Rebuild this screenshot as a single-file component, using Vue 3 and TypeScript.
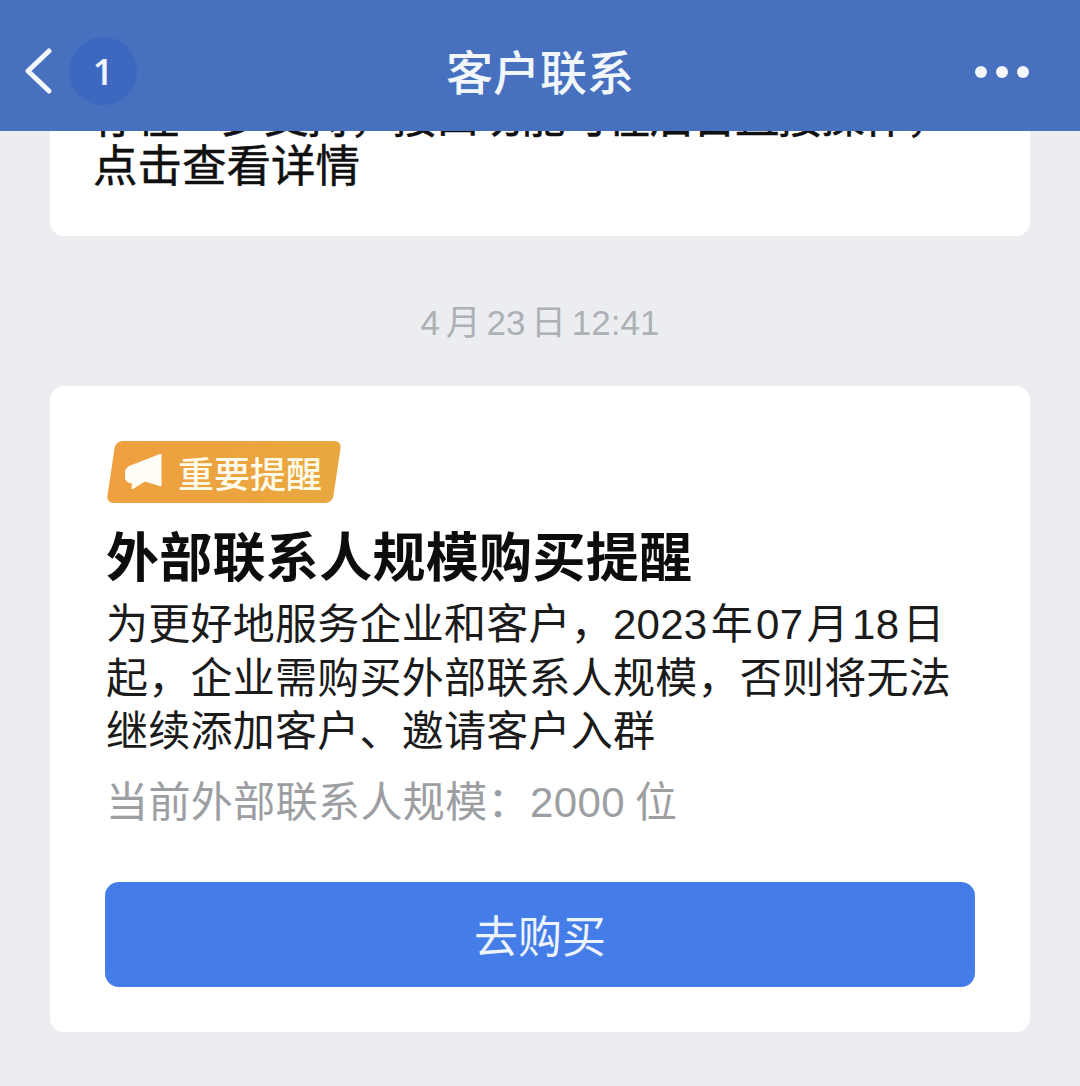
<script setup lang="ts">
const dots = [0, 1, 2]
</script>

<template>
  <div class="page">
    <header class="nav">
      <div class="nav-left">
        <svg class="back" viewBox="0 0 28 46" width="28" height="46">
          <path d="M25 3 L4 23 L25 43" fill="none" stroke="#f4f8fc" stroke-width="5" stroke-linecap="round" stroke-linejoin="round" />
        </svg>
        <span class="badge">1</span>
      </div>
      <h1 class="nav-title">客户联系</h1>
      <div class="more">
        <i v-for="d in dots" :key="d"></i>
      </div>
    </header>

    <main class="list">
      <section class="card top-card">
        <p class="clip-line">存在一步支持，接口功能可在后台直接操作，</p>
        <p class="top-text">点击查看详情</p>
      </section>

      <div class="time">4 月 23 日 12:41</div>

      <section class="card notice">
        <div class="tag">
          <svg class="tag-icon" viewBox="0 0 37 36" width="37" height="36">
            <path d="M36 0 L36 32 L20 27 L7 35 L7.5 29 C2 29 0 26 0 21 C0 15 3 12 8 11 Z" fill="#fffdf6" stroke="#fffdf6" stroke-width="1" stroke-linejoin="round" />
          </svg>
          <span>重要提醒</span>
        </div>
        <h2 class="notice-title">外部联系人规模购买提醒</h2>
        <p class="notice-body">为更好地服务企业和客户，2023 年 07 月 18 日起，企业需购买外部联系人规模，否则将无法继续添加客户、邀请客户入群</p>
        <p class="notice-meta">当前外部联系人规模：2000 位</p>
        <button class="buy">去购买</button>
      </section>
    </main>
  </div>
</template>

<style>
html, body {
  margin: 0;
  background: #ebedf1;
}
</style>

<style scoped>
.page {
  width: 1080px;
  height: 1086px;
  overflow: hidden;
  background: #ebedf1;
  font-family: "Liberation Sans", "Noto Sans CJK SC", sans-serif;
}

.nav {
  height: 131px;
  background: #4770bf;
  display: grid;
  grid-template-columns: 1fr auto 1fr;
  align-items: center;
  padding: 11px 51px 0 24px;
  box-sizing: border-box;
  position: relative;
  z-index: 1;
}

.nav-left {
  display: flex;
  align-items: center;
  gap: 17px;
}

.badge {
  width: 68px;
  height: 68px;
  border-radius: 50%;
  background: #3c68c0;
  color: #f1f5fb;
  font-size: 36px;
  font-weight: 600;
  font-family: "Open Sans", sans-serif;
  display: flex;
  align-items: center;
  justify-content: center;
}

.nav-title {
  margin: 0 0 4px 27px;
  color: #f1f6fb;
  font-size: 47px;
  font-weight: 500;
  font-family: "Noto Sans CJK SC", sans-serif;
  line-height: 1;
}

.more {
  display: flex;
  justify-content: flex-end;
  gap: 9px;
  margin-top: 2px;
}

.more i {
  width: 12px;
  height: 12px;
  border-radius: 50%;
  background: #f4f7fc;
}

.list {
  padding: 0 50px;
}

.card {
  background: #fff;
  border-radius: 14px;
}

.top-card {
  height: 105px;
  padding: 0 43px;
  overflow: hidden;
  color: #101010;
  font-size: 44.5px;
  -webkit-text-stroke: 0.5px #101010;
  font-family: "Noto Sans CJK SC", sans-serif;
  box-sizing: border-box;
  border-radius: 0 0 14px 14px;
}

.clip-line {
  margin: -41px 0 0;
  line-height: 48px;
  height: 48px;
  letter-spacing: -1.7px;
  white-space: nowrap;
}

.top-text {
  margin: -3px 0 0;
  line-height: 56px;
}

.time {
  text-align: center;
  color: #adb0b5;
  font-size: 35px;
  word-spacing: -4px;
  line-height: 44px;
  margin: 65px 0 41px;
}

.notice {
  height: 646px;
  padding: 55px 55px 0 56px;
  box-sizing: border-box;
}

.tag {
  width: 236px;
  height: 62px;
  position: relative;
  display: flex;
  align-items: center;
  gap: 16px;
  padding-left: 19px;
  box-sizing: border-box;
  color: #fffbea;
  font-size: 36px;
  font-weight: 500;
  font-family: "Noto Sans CJK SC", sans-serif;
}

.tag::before {
  content: "";
  position: absolute;
  inset: 0 5px;
  background: linear-gradient(90deg, #ef9f3f, #e9a83f);
  border-radius: 7px;
  transform: skewX(-8.5deg);
}

.tag > * {
  position: relative;
}

.notice-title {
  margin: 17px 0 0;
  color: #0d0d0d;
  font-size: 53px;
  letter-spacing: 0.3px;
  font-weight: 700;
  font-family: "Noto Sans CJK SC", sans-serif;
  line-height: 68px;
  white-space: nowrap;
}

.notice-body {
  margin: 10px 0 0;
  color: #1b1b1b;
  font-size: 42px;
  letter-spacing: 0.25px;
  word-spacing: -8.7px;
  line-height: 53.5px;
}

.notice-meta {
  margin: 16px 0 0;
  color: #9c9ea2;
  font-size: 42px;
  letter-spacing: 0.4px;
  word-spacing: -2px;
  line-height: 56px;
}

.buy {
  display: block;
  width: 870px;
  height: 105px;
  margin: 51px 0 0 -1px;
  border: none;
  border-radius: 14px;
  background: #447de7;
  color: #eef4fd;
  font-size: 44px;
  font-family: "Noto Sans CJK SC", sans-serif;
}
</style>
